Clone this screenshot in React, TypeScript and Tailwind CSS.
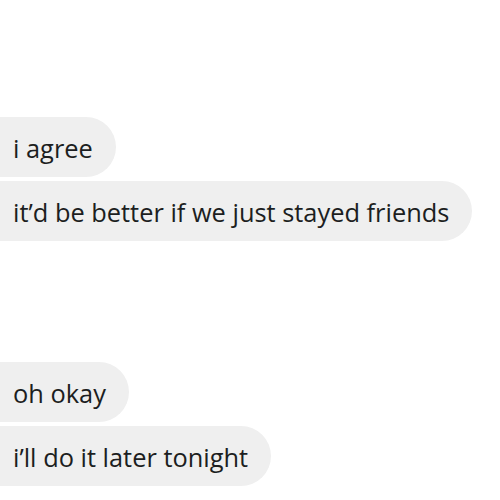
import React from 'react';

const groups = [
  { top: 'mt-[117px]', msgs: ["i agree", "it\u2019d be better if we just stayed friends"] },
  { top: 'mt-[121px]', msgs: ["oh okay", "i\u2019ll do it later tonight"] },
];

export default function App() {
  return (
    <div className="w-[500px] h-[500px] bg-white overflow-hidden" style={{ fontFamily: '"Open Sans", "Noto Sans", sans-serif' }}>
      {groups.map((g, i) => (
        <div key={i} className={`${g.top} flex flex-col items-start gap-[4px]`}>
          {g.msgs.map((m, j) => (
            <div
              key={j}
              className="-ml-[30px] h-[60px] flex items-center pl-[43px] pr-[23px] pt-[3px] rounded-[30px] bg-[#efefef] text-[#1c1e21] text-[25.4px] whitespace-nowrap"
            >
              {m}
            </div>
          ))}
        </div>
      ))}
    </div>
  );
}
